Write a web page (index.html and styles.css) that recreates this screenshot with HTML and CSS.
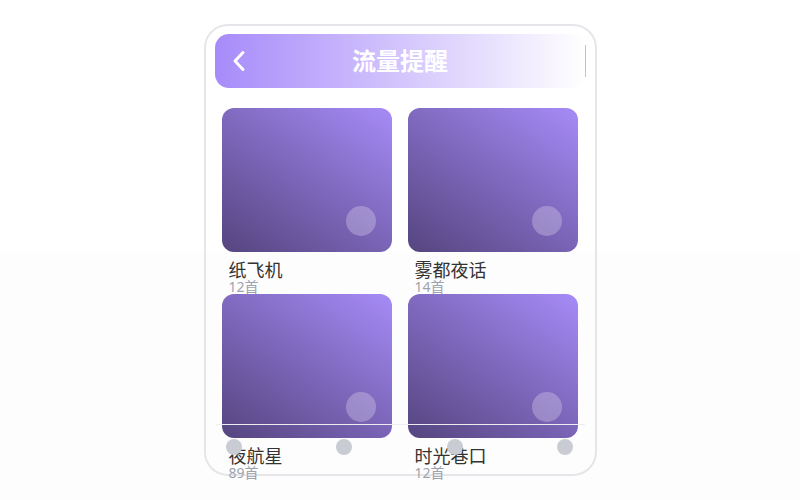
FILE: index.html
```html
<!DOCTYPE html>
<html lang="zh-CN">
<head>
  <meta charset="UTF-8">
  <meta name="viewport" content="width=device-width, initial-scale=1.0">
  <title>流量提醒</title>
  <link rel="stylesheet" href="styles.css">
</head>
<body>
  <div class="phone">
    <header class="top-bar">
      <a href="#" class="back-btn">
        <svg width="14" height="22" viewBox="0 0 14 22">
          <polyline points="11,2.5 3,11 11,19.5" fill="none" stroke="#fff" stroke-width="3" stroke-linecap="round" stroke-linejoin="round"/>
        </svg>
      </a>
      <h1>流量提醒</h1>
      <span></span>
    </header>

    <div class="album-grid">
      <div class="album">
        <div class="cover"><span class="play-dot"></span></div>
        <div class="album-info">
          <div class="album-name">纸飞机</div>
          <div class="album-count">12首</div>
        </div>
      </div>
      <div class="album">
        <div class="cover"><span class="play-dot"></span></div>
        <div class="album-info">
          <div class="album-name">雾都夜话</div>
          <div class="album-count">14首</div>
        </div>
      </div>
      <div class="album">
        <div class="cover"><span class="play-dot"></span></div>
        <div class="album-info">
          <div class="album-name">夜航星</div>
          <div class="album-count">89首</div>
        </div>
      </div>
      <div class="album">
        <div class="cover"><span class="play-dot"></span></div>
        <div class="album-info">
          <div class="album-name">时光巷口</div>
          <div class="album-count">12首</div>
        </div>
      </div>
    </div>

    <!-- bottom tab bar -->
    <nav class="tab-bar">
      <span class="tab-dot"></span>
      <span class="tab-dot"></span>
      <span class="tab-dot"></span>
      <span class="tab-dot"></span>
    </nav>
  </div>
</body>
</html>
```

FILE: styles.css
```css
body {
  font-family: "Noto Sans", "Noto Sans CJK SC", sans-serif;
  margin: 0;
  padding: 24px 0 0;
  min-height: 100vh;
  box-sizing: border-box;
  background: linear-gradient(#ffffff 0, #ffffff 252px, #fdfdfd 252px);
  display: flex;
  flex-direction: column;
  align-items: center;
}

.phone {
  position: relative;
  width: 393px;
  height: 452px;
  box-sizing: border-box;
  padding: 8px 9px 0;
  border: 2px solid #e6e6ea;
  border-radius: 24px;
}

.top-bar {
  position: relative;
  display: grid;
  grid-template-columns: 1fr auto 1fr;
  align-items: center;
  height: 54px;
  padding: 0 17px;
  border-radius: 14px;
  background: linear-gradient(to right, #a78bfa, #ffffff);
}

/* thin edge on the right side of the bar */
.top-bar::after {
  content: "";
  position: absolute;
  right: 0;
  top: 11px;
  bottom: 11px;
  width: 1px;
  background: #c4b5fd;
}

.back-btn {
  display: flex;
  width: 14px;
}

.top-bar h1 {
  margin: 0;
  font-size: 24px;
  font-weight: bold;
  color: #fff;
  line-height: 1;
}

.album-grid {
  display: grid;
  grid-template-columns: 1fr 1fr;
  column-gap: 16px;
  margin-top: 20px;
  padding: 0 8px 0 7px;
}

.album {
  height: 186px;
}

.cover {
  position: relative;
  height: 144px;
  border-radius: 12px;
  background: linear-gradient(35deg, #55457f 0%, #7d67bb 50%, #a68bf7 100%);
}

.play-dot {
  position: absolute;
  right: 16px;
  bottom: 16px;
  width: 30px;
  height: 30px;
  border-radius: 50%;
  background: rgba(255, 255, 255, 0.25);
}

.album-info {
  margin-top: 8px;
  padding: 0 7px;
}

.album-name {
  font-size: 18px;
  line-height: 20px;
  color: #333;
}

.album-count {
  font-size: 14px;
  line-height: 14px;
  color: #9ca3af;
}

.tab-bar {
  position: absolute;
  left: 10px;
  right: 10px;
  top: 398px;
  display: flex;
  justify-content: space-between;
  padding: 14px 11px 0 10px;
  border-top: 1px solid #ededf1;
}

.tab-dot {
  width: 16px;
  height: 16px;
  border-radius: 50%;
  background: #c9cdd3;
}
```
